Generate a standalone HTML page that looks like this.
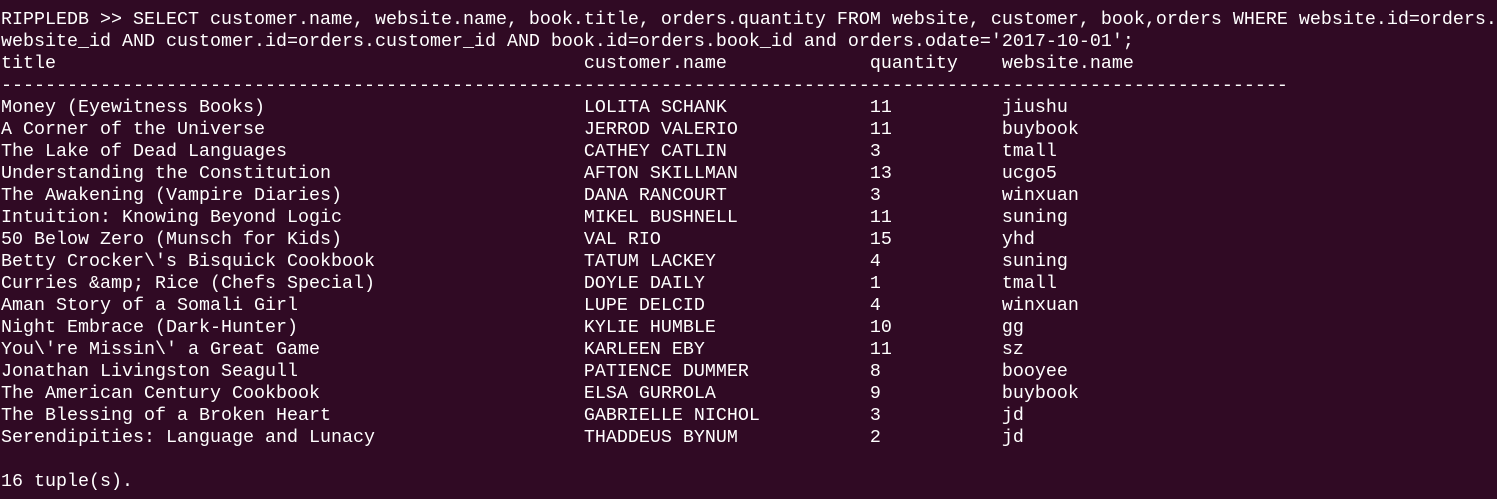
<!DOCTYPE html>
<html><head><meta charset="utf-8"><style>
html,body{margin:0;padding:0;background:#300a24;width:1497px;height:499px;overflow:hidden}
pre{margin:0;position:absolute;left:1px;top:9px;font-family:"Liberation Mono","DejaVu Sans Mono",monospace;font-size:18.33px;line-height:22px;color:#ffffff;white-space:pre}
</style></head><body><pre>RIPPLEDB &gt;&gt; SELECT customer.name, website.name, book.title, orders.quantity FROM website, customer, book,orders WHERE website.id=orders.
website_id AND customer.id=orders.customer_id AND book.id=orders.book_id and orders.odate='2017-10-01';
title                                                customer.name             quantity    website.name
---------------------------------------------------------------------------------------------------------------------
Money (Eyewitness Books)                             LOLITA SCHANK             11          jiushu
A Corner of the Universe                             JERROD VALERIO            11          buybook
The Lake of Dead Languages                           CATHEY CATLIN             3           tmall
Understanding the Constitution                       AFTON SKILLMAN            13          ucgo5
The Awakening (Vampire Diaries)                      DANA RANCOURT             3           winxuan
Intuition: Knowing Beyond Logic                      MIKEL BUSHNELL            11          suning
50 Below Zero (Munsch for Kids)                      VAL RIO                   15          yhd
Betty Crocker\'s Bisquick Cookbook                   TATUM LACKEY              4           suning
Curries &amp;amp; Rice (Chefs Special)                   DOYLE DAILY               1           tmall
Aman Story of a Somali Girl                          LUPE DELCID               4           winxuan
Night Embrace (Dark-Hunter)                          KYLIE HUMBLE              10          gg
You\'re Missin\' a Great Game                        KARLEEN EBY               11          sz
Jonathan Livingston Seagull                          PATIENCE DUMMER           8           booyee
The American Century Cookbook                        ELSA GURROLA              9           buybook
The Blessing of a Broken Heart                       GABRIELLE NICHOL          3           jd
Serendipities: Language and Lunacy                   THADDEUS BYNUM            2           jd

16 tuple(s).</pre></body></html>
